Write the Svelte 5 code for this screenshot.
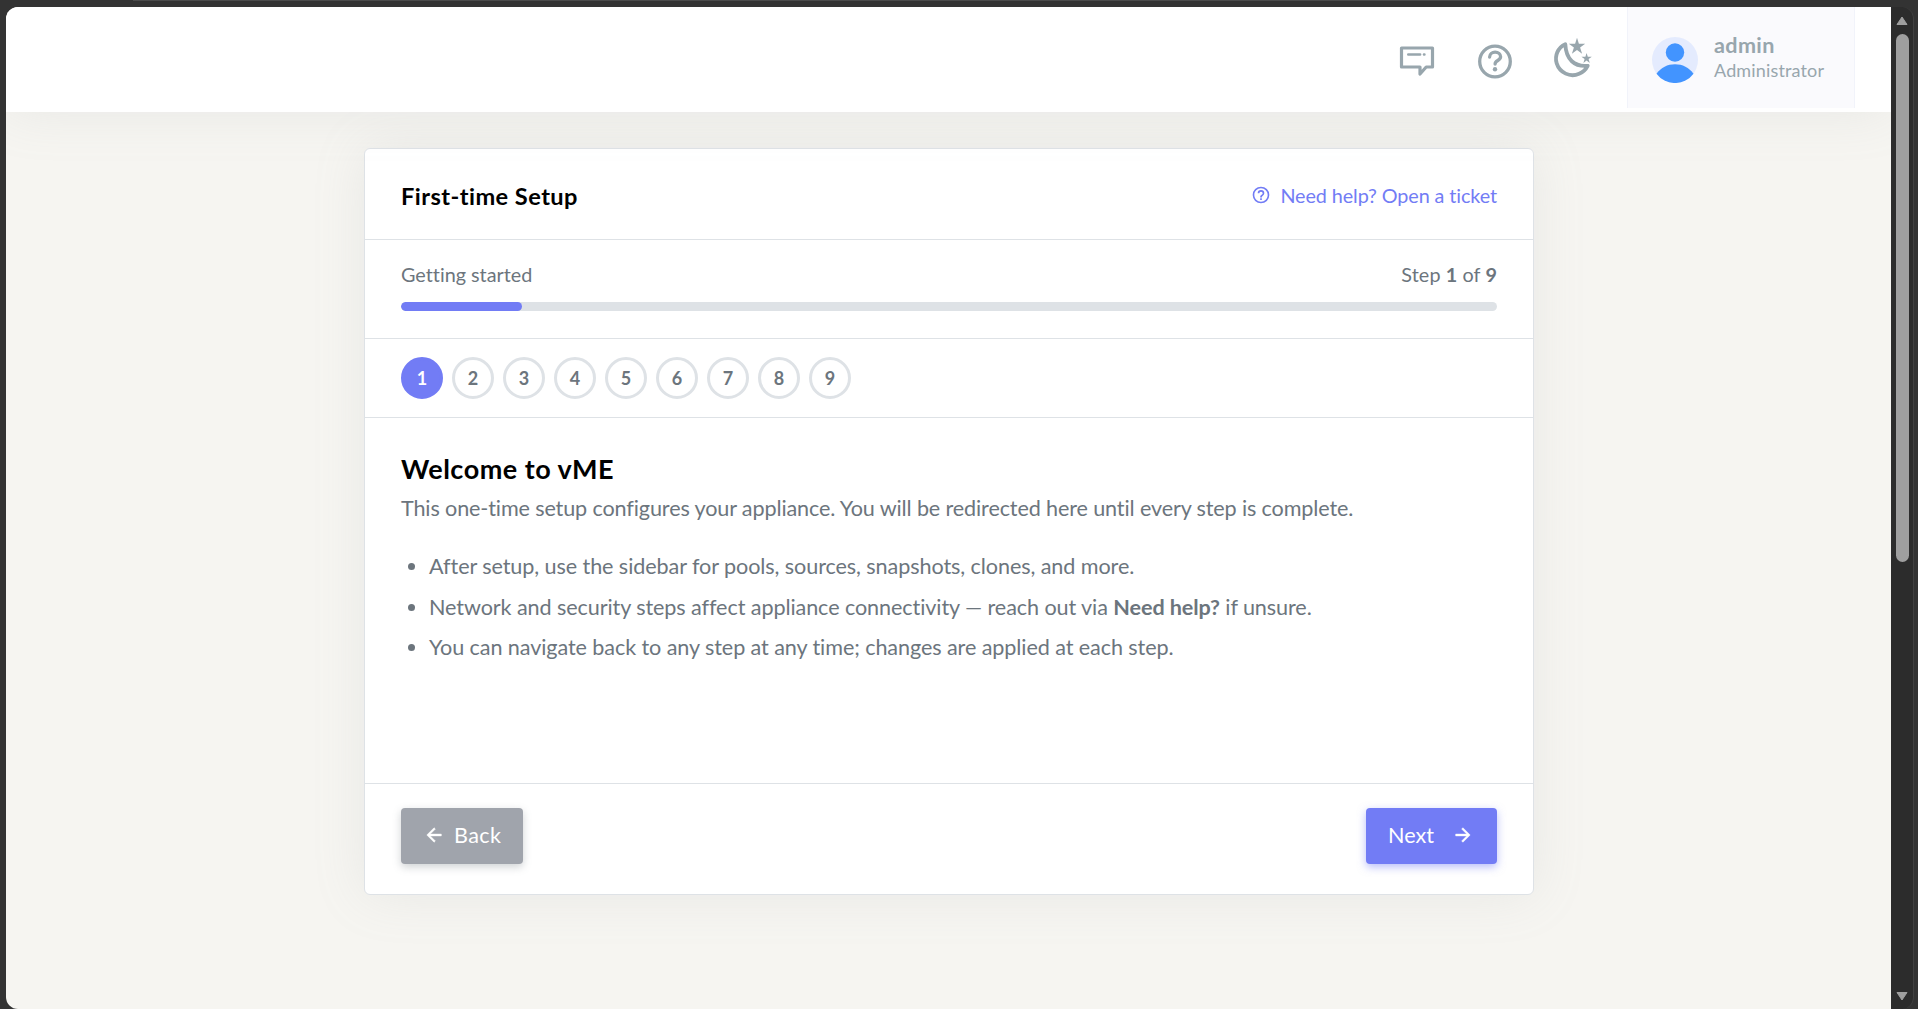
<script lang="ts">
  let current = 1
  const steps = [1, 2, 3, 4, 5, 6, 7, 8, 9]
  const user = { name: 'admin', role: 'Administrator' }

  $: percent = Math.floor((current / steps.length) * 100)
</script>

<div class="window">
  <div class="strip"></div>
  <div class="viewport">
    <div class="page">
      <header class="topbar">
        <button type="button" class="icon-btn" aria-label="Messages">
          <svg width="40" height="40" viewBox="0 0 40 40" fill="none" stroke="currentColor" stroke-width="3.2" stroke-linejoin="round" stroke-linecap="round">
            <path d="M4.500 8h31v19h-6.300l-6.200 7v-7H4.500z" />
            <path d="M11.300 14.500h11.800M27 14.500h.4" stroke-width="2.600" />
          </svg>
        </button>
        <button type="button" class="icon-btn" aria-label="Help">
          <svg width="40" height="40" viewBox="0 0 40 40" fill="none" stroke="currentColor" stroke-width="3.3" stroke-linecap="round">
            <circle cx="20" cy="21.500" r="15.300" />
            <path d="M14.600 17c.2-3 2.500-4.800 5.500-4.800 3.200 0 5.500 1.900 5.500 4.600 0 3.900-5.500 3.500-5.500 7.200" />
            <circle cx="20" cy="29.200" r="2.200" fill="currentColor" stroke="none" />
          </svg>
        </button>
        <button type="button" class="icon-btn" aria-label="Dark mode">
          <svg width="40" height="40" viewBox="0 0 40 40" fill="none">
            <path d="M11.800 4C4.500 7.200.8 15.500 3.200 23.200c3 9.500 13.500 14.300 22.400 10.400 4-1.700 6.900-4.700 8.600-8C21 26.800 12.500 19.500 11.800 4z" transform="translate(.5 .2)" stroke="currentColor" stroke-width="3.800" stroke-linejoin="round" />
            <path fill="currentColor" d="m24 -2.200 1.900 6h6.300l-5.100 3.800 2 6.200-5.100-3.800-5.100 3.800 2-6.200-5.100-3.800h6.300z" />
            <path fill="currentColor" d="m33.600 13 1.200 3.700h4l-3.200 2.400 1.200 3.900-3.200-2.400-3.200 2.400 1.200-3.900-3.200-2.400h4z" />
          </svg>
        </button>
        <div class="user">
          <svg width="46" height="46" viewBox="0 0 46 46" aria-hidden="true">
            <circle cx="23" cy="23" r="23" fill="#e4ebfe" />
            <circle cx="23" cy="15.500" r="9.200" fill="#4294ff" />
            <path d="M4.500 36.700C9 30.500 15.500 27.200 23 27.200s14 3.300 18.500 9.500A23 23 0 0 1 4.500 36.700z" fill="#4294ff" />
          </svg>
          <div class="user-text">
            <span class="user-name">{user.name}</span>
            <span class="user-role">{user.role}</span>
          </div>
        </div>
      </header>

      <main>
        <section class="card">
          <div class="card-header">
            <h4>First-time Setup</h4>
            <a href="#ticket" class="help">
              <svg width="20" height="20" viewBox="0 0 24 24" fill="currentColor"><path d="M11 18h2v-2h-2v2m1-16A10 10 0 0 0 2 12a10 10 0 0 0 10 10 10 10 0 0 0 10-10A10 10 0 0 0 12 2m0 18c-4.410 0-8-3.590-8-8s3.590-8 8-8 8 3.590 8 8-3.590 8-8 8m0-14a4 4 0 0 0-4 4h2a2 2 0 0 1 2-2 2 2 0 0 1 2 2c0 2-3 1.750-3 5h2c0-2.250 3-2.500 3-5a4 4 0 0 0-4-4z" /></svg>
              <span>Need help? Open a ticket</span>
            </a>
          </div>

          <div class="progress-row">
            <div class="progress-text">
              <span>Getting started</span>
              <span class="count">Step <b>{current}</b> of <b>{steps.length}</b></span>
            </div>
            <div class="progress">
              <div class="bar" style="width: {percent}%"></div>
            </div>
          </div>

          <div class="steps">
            {#each steps as step}
              <button type="button" class="step" class:active={step === current}>{step}</button>
            {/each}
          </div>

          <div class="body">
            <h3>Welcome to vME</h3>
            <p>This one-time setup configures your appliance. You will be redirected here until every step is complete.</p>
            <ul>
              <li>After setup, use the sidebar for pools, sources, snapshots, clones, and more.</li>
              <li>Network and security steps affect appliance connectivity — reach out via <b>Need help?</b> if unsure.</li>
              <li>You can navigate back to any step at any time; changes are applied at each step.</li>
            </ul>
          </div>

          <div class="footer">
            <button type="button" class="btn back">
              <svg width="22" height="22" viewBox="0 0 24 24" fill="currentColor" stroke="currentColor" stroke-width=".5"><path d="M20 11v2H8l5.500 5.500-1.420 1.420L4.160 12l7.920-7.920L13.500 5.500 8 11h12z" /></svg>
              <span>Back</span>
            </button>
            <button type="button" class="btn next">
              <span>Next</span>
              <svg width="22" height="22" viewBox="0 0 24 24" fill="currentColor" stroke="currentColor" stroke-width=".5"><path d="M4 11v2h12l-5.500 5.500 1.420 1.420L19.840 12l-7.920-7.920L10.500 5.500 16 11H4z" /></svg>
            </button>
          </div>
        </section>
      </main>
    </div>
    <div class="scrollbar">
      <svg width="12" height="10" viewBox="0 0 12 10"><path d="M6 1 11 8.500H1z" fill="#9f9f9f" stroke="#9f9f9f" stroke-linejoin="round" /></svg>
      <div class="thumb"></div>
      <svg class="down" width="12" height="10" viewBox="0 0 12 10"><path d="M6 9 1 1.500h10z" fill="#9f9f9f" stroke="#9f9f9f" stroke-linejoin="round" /></svg>
    </div>
  </div>
</div>

<style>
  :global(body) {
    margin: 0;
    overflow: hidden;
    background: #333;
  }

  .window {
    display: flex;
    flex-direction: column;
    height: 1009px;
    box-sizing: border-box;
    padding-right: 4px;
    padding-left: 6px;
    background: #333;
    color: #6c757d;
    font-family: Lato, 'Open Sans', sans-serif;
    font-size: 21.6px;
    font-variant-ligatures: none;
  }

  .strip {
    height: 1px;
    margin: 0 354px 6px 127px;
    background: #4b4b4b;
  }

  .viewport {
    display: flex;
    flex: 1;
    min-height: 0;
    border-right: 1px solid #414141;
    border-radius: 12px;
    background: #2c2c2c;
    overflow: hidden;
  }

  .page {
    width: 1885px;
    background: #f6f5f1;
    overflow: hidden;
  }

  .topbar {
    position: relative;
    z-index: 1;
    display: flex;
    justify-content: flex-end;
    box-sizing: border-box;
    height: 105px;
    padding: 0 36px 4px 0;
    background: #fff;
    box-shadow: 0 0 52px rgba(154, 161, 171, 0.15);
  }

  button {
    padding: 0;
    border: 0;
    background: none;
    font: inherit;
  }

  .icon-btn {
    width: 40px;
    margin-right: 38px;
    padding-top: 4px;
    color: #98a6ad;
  }

  .icon-btn svg {
    display: block;
    overflow: visible;
  }

  .icon-btn:nth-child(3) {
    margin-right: 34px;
  }

  .user {
    display: flex;
    box-sizing: border-box;
    width: 228px;
    padding: 30px 0 0 24px;
    border: 1px solid #f1f3fa;
    border-width: 0 1px;
    background: #fafafd;
    color: #98a6ad;
  }

  .user-text {
    display: flex;
    flex-direction: column;
    margin: -5px 0 0 16px;
  }

  .user-name {
    font-size: 21.6px;
    line-height: 27px;
    font-weight: 700;
    letter-spacing: 0.35px;
  }

  .user-role {
    font-size: 18px;
    line-height: 23px;
    letter-spacing: 0.15px;
  }

  main {
    padding: 36px 0 0 358px;
  }

  .card {
    box-sizing: border-box;
    width: 1170px;
    border: 1px solid #dee2e6;
    border-radius: 6px;
    background: #fff;
    box-shadow: 0 0 52px rgba(154, 161, 171, 0.15);
  }

  .card-header {
    display: flex;
    align-items: center;
    justify-content: space-between;
    height: 90px;
    padding: 0 36px;
    border-bottom: 1px solid #dee2e6;
  }

  h3,
  h4 {
    margin: 0;
    color: #000;
    font-weight: 700;
  }

  h4 {
    padding-top: 4px;
    font-size: 23.6px;
    line-height: 36px;
    letter-spacing: 0.45px;
  }

  .help {
    display: flex;
    align-items: center;
    gap: 9px;
    padding-top: 2px;
    color: #727cf5;
    font-size: 19.8px;
    line-height: 30px;
    letter-spacing: -0.09px;
    text-decoration: none;
  }

  .progress-row {
    height: 98px;
    padding: 0 36px;
    border-bottom: 1px solid #dee2e6;
  }

  .progress-text {
    display: flex;
    justify-content: space-between;
    padding: 19px 0 13px;
    font-size: 19.8px;
    line-height: 30px;
  }

  .count {
    letter-spacing: 0.1px;
  }

  .progress {
    height: 9px;
    border-radius: 5px;
    background: #dee2e6;
    overflow: hidden;
  }

  .bar {
    height: 9px;
    border-radius: 5px;
    background: #727cf5;
  }

  .steps {
    display: flex;
    gap: 9px;
    height: 60px;
    padding: 18px 36px 0;
    border-bottom: 1px solid #dee2e6;
  }

  .step {
    box-sizing: border-box;
    width: 42px;
    height: 42px;
    border: 3px solid #dee2e6;
    border-radius: 50%;
    background: #fff;
    color: #6c757d;
    font-size: 18px;
    font-weight: 700;
    line-height: 36px;
  }

  .step.active {
    border-color: #727cf5;
    background: #727cf5;
    color: #fff;
  }

  .body {
    box-sizing: border-box;
    height: 365px;
    padding: 33px 36px 0;
  }

  h3 {
    font-size: 27px;
    line-height: 36px;
    letter-spacing: 0.5px;
  }

  p {
    margin: 5px 0 25px;
    line-height: 33px;
    letter-spacing: -0.13px;
    white-space: nowrap;
  }

  ul {
    margin: 0;
    padding-left: 28px;
    letter-spacing: -0.09px;
    white-space: nowrap;
  }

  li {
    margin-bottom: 8px;
    line-height: 32.5px;
  }

  .footer {
    display: flex;
    justify-content: space-between;
    height: 86px;
    padding: 24px 36px 0;
    border-top: 1px solid #dee2e6;
  }

  .btn {
    display: flex;
    align-items: center;
    box-sizing: border-box;
    height: 56px;
    padding-bottom: 2px;
    border-radius: 4px;
    color: #fff;
    line-height: 32px;
  }

  .back {
    width: 122px;
    padding-left: 22px;
    gap: 9px;
    background: #a0a4ac;
    box-shadow: 0 3px 9px rgba(108, 117, 125, 0.33);
    letter-spacing: 0.4px;
  }

  .next {
    width: 131px;
    padding-left: 22px;
    gap: 18px;
    background: #727cf5;
    box-shadow: 0 3px 9px rgba(114, 124, 245, 0.5);
  }

  .scrollbar {
    display: flex;
    flex: 1;
    flex-direction: column;
    align-items: center;
    padding: 9px 0 8px;
  }

  .thumb {
    width: 13px;
    height: 528px;
    margin-top: 8px;
    border-radius: 7px;
    background: #9f9f9f;
  }

  .down {
    margin-top: auto;
  }
</style>
